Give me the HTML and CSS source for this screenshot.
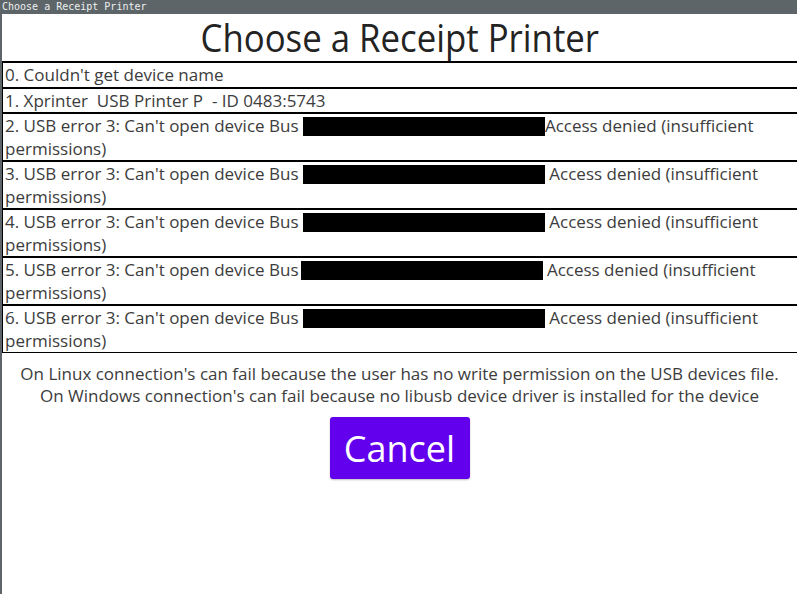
FILE: index.html
```html
<!DOCTYPE html>
<html>
<head>
<meta charset="utf-8">
<link rel="stylesheet" href="styles.css">
</head>
<body>
<div class="titlebar">Choose a Receipt Printer</div>
<div class="window">
  <h1 class="heading"><span class="heading-text">Choose a Receipt Printer</span></h1>
  <ul class="devices">
    <li class="device">0. Couldn't get device name</li>
    <li class="device">1. Xprinter&nbsp; USB Printer P&nbsp; - ID 0483:5743</li>
    <li class="device">2. USB error 3: Can't open device Bus <span class="redact"></span>Access denied (insufficient permissions)</li>
    <li class="device">3. USB error 3: Can't open device Bus <span class="redact"></span> Access denied (insufficient permissions)</li>
    <li class="device">4. USB error 3: Can't open device Bus <span class="redact"></span> Access denied (insufficient permissions)</li>
    <li class="device">5. USB error 3: Can't open device Bus<span class="redact redact-tight"></span> Access denied (insufficient permissions)</li>
    <li class="device">6. USB error 3: Can't open device Bus <span class="redact"></span> Access denied (insufficient permissions)</li>
  </ul>
  <p class="note">On Linux connection's can fail because the user has no write permission on the USB devices file.<br>On Windows connection's can fail because no libusb device driver is installed for the device</p>
  <div class="actions"><button class="cancel">Cancel</button></div>
</div>
</body>
</html>
```
FILE: styles.css
```css
html, body {
  margin: 0;
  padding: 0;
  height: 100%;
  background: #ffffff;
}
body {
  display: flex;
  flex-direction: column;
  font-family: "Open Sans", "Noto Sans", sans-serif;
  color: #3c3c3c;
}
.titlebar {
  height: 14px;
  background: #5d6568;
  color: #eef0f0;
  font-family: "DejaVu Sans Mono", monospace;
  font-size: 10px;
  line-height: 13px;
  padding-left: 2px;
  white-space: pre;
}
.window {
  flex: 1;
  border-left: 2px solid #5d6568;
  display: flex;
  flex-direction: column;
}
.heading {
  margin: 0;
  height: 47px;
  font-family: "Open Sans", sans-serif;
  font-weight: 400;
  font-size: 38px;
  line-height: 47px;
  text-align: center;
  color: #232323;
}
.heading-text {
  display: inline-block;
  transform: scaleX(0.915);
}
.devices {
  list-style: none;
  margin: 0;
  padding: 0;
  border-left: 1px solid #000;
  border-bottom: 1px solid #000;
}
.device {
  border-top: 2px solid #000;
  padding-left: 2px;
  font-size: 17px;
  line-height: 23px;
}
.device:first-child {
  line-height: 24px;
}
.redact {
  display: inline-block;
  width: 242px;
  height: 19px;
  background: #000;
  vertical-align: -4px;
}
.redact-tight {
  margin-left: 2px;
}
.note {
  margin: 10px 0 0;
  text-align: center;
  font-size: 17px;
  line-height: 22px;
}
.actions {
  display: flex;
  justify-content: center;
  margin-top: 10px;
}
.cancel {
  width: 140px;
  height: 62px;
  border: none;
  border-radius: 3px;
  background: #6200ee;
  color: #ffffff;
  font-family: "Open Sans", sans-serif;
  font-size: 36px;
  box-shadow: 0 1px 2px rgba(0,0,0,0.25);
  padding: 0;
}
```
